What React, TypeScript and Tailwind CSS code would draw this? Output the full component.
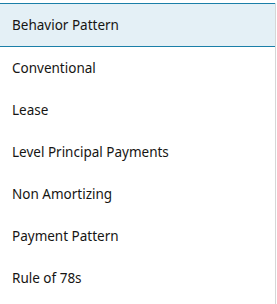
import React from "react";

const items = [
  "Behavior Pattern",
  "Conventional",
  "Lease",
  "Level Principal Payments",
  "Non Amortizing",
  "Payment Pattern",
  "Rule of 78s",
];

const App = () => {
  return (
    <div className="w-[277px] h-[304px] bg-white pt-[3px] overflow-hidden" style={{ fontFamily: '"Noto Sans", sans-serif' }}>
      <ul className="w-[276px] border-r border-[#d6d6d6]">
        {items.map((item, index) => (
          <li
            key={index}
            className={
              index === 0
                ? "h-[44px] flex items-center px-3 bg-[#e4f0f6] border-y border-[#1a7fa8] text-[13.5px] text-[#161513]"
                : "h-[42px] flex items-center px-3 text-[13.5px] text-[#161513]"
            }
          >
            {item}
          </li>
        ))}
        <li className="h-[20px]"></li>
      </ul>
    </div>
  );
};

export default App;
